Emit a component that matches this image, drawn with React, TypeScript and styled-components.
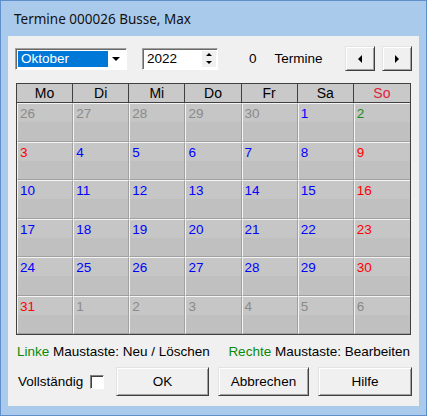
import React from 'react';
import styled, { createGlobalStyle } from 'styled-components';

const GlobalStyle = createGlobalStyle`
  html, body {
    margin: 0;
    padding: 0;
    background: #ffffff;
  }
  * {
    box-sizing: border-box;
  }
`;

// Window frame

const Window = styled.div`
  width: 427px;
  height: 416px;
  border: 1px solid #5e8fcc;
  background: #aacaec;
  display: flex;
  flex-direction: column;
  font-family: 'Liberation Sans', Arial, sans-serif;
  font-size: 13px;
  color: #000;
`;

const TitleBar = styled.div`
  height: 35px;
  padding-left: 13px;
  display: flex;
  align-items: center;
  font-family: 'Noto Sans', 'Open Sans', sans-serif;
  font-size: 13.5px;
  color: #111;
`;

const Client = styled.div`
  flex: 1;
  margin: 0 7px 9px 7px;
  background: #f0f0f0;
  display: flex;
  flex-direction: column;
  padding-top: 10px;
`;

// Toolbar

const Toolbar = styled.div`
  height: 25px;
  padding: 0 7px;
  display: flex;
  align-items: center;
`;

const Select = styled.div`
  width: 112px;
  height: 22px;
  display: flex;
  border: 1px solid;
  border-color: #a0a0a0 #ffffff #ffffff #a0a0a0;
  box-shadow: inset 1px 1px #696969;
  background: #ffffff;
  padding: 2px;
`;

const SelectValue = styled.div`
  flex: 1;
  background: #0078d7;
  color: #ffffff;
  padding-left: 3px;
  display: flex;
  align-items: center;
  font-size: 13.5px;
`;

const DropButton = styled.div`
  width: 16px;
  display: flex;
  align-items: center;
  justify-content: center;
  background: #ffffff;
`;

const YearBox = styled(Select)`
  width: 76px;
  margin-left: 15px;
  padding: 2px 1px 2px 2px;
`;

const YearValue = styled.div`
  flex: 1;
  padding-left: 2px;
  display: flex;
  align-items: center;
  font-size: 13.5px;
`;

const Spin = styled.div`
  width: 14px;
  display: flex;
  flex-direction: column;
  align-items: center;
  justify-content: space-around;
  background: #f0f0f0;
`;

const Count = styled.span`
  margin-left: 31px;
  font-size: 13.5px;
`;

const CountLabel = styled.span`
  margin-left: 18px;
  font-size: 13.5px;
`;

const NavButtons = styled.div`
  margin-left: auto;
  display: flex;
  gap: 7px;
`;

const Button = styled.button<{ $w: number; $h?: number }>`
  width: ${(p) => p.$w}px;
  height: ${(p) => p.$h ?? 29}px;
  padding: 0;
  font: inherit;
  font-size: 13.5px;
  color: #000;
  background: #f0f0f0;
  border: 1px solid;
  border-color: #e3e3e3 #404040 #404040 #e3e3e3;
  box-shadow: inset 1px 1px #ffffff, inset -1px -1px #a0a0a0;
  display: flex;
  align-items: center;
  justify-content: center;
`;

const Tri = ({ dir, size = 4 }: { dir: 'up' | 'down' | 'left' | 'right'; size?: number }) => {
  const s = size;
  const pts = {
    up: `0,${s} ${s},0 ${2 * s},${s}`,
    down: `0,0 ${2 * s},0 ${s},${s}`,
    left: `${s},0 ${s},${2 * s} 0,${s}`,
    right: `0,0 0,${2 * s} ${s},${s}`,
  }[dir];
  const horiz = dir === 'left' || dir === 'right';
  return (
    <svg width={horiz ? s : 2 * s} height={horiz ? 2 * s : s} style={{ display: 'block' }}>
      <polygon points={pts} fill="#000" />
    </svg>
  );
};

// Calendar grid

const Grid = styled.div`
  margin: 12px 8px 0 8px;
  height: 252px;
  border: 1px solid #404040;
  display: grid;
  grid-template-columns: repeat(7, 1fr);
  grid-template-rows: 19px repeat(6, 1fr);
  background: #c0c0c0;
`;

const HeadCell = styled.div<{ $red?: boolean; $last?: boolean }>`
  background: #c9c9c9;
  border-right: ${(p) => (p.$last ? 'none' : '1px solid #404040')};
  border-bottom: 1px solid #404040;
  display: flex;
  align-items: center;
  justify-content: center;
  font-size: 14px;
  color: ${(p) => (p.$red ? '#e0203c' : '#000')};
`;

const DayCell = styled.div<{ $color: string; $last?: boolean }>`
  border-left: 1px solid #f4f4f4;
  border-top: 1px solid #f4f4f4;
  border-right: ${(p) => (p.$last ? 'none' : '1px solid #a0a0a0')};
  border-bottom: 1px solid #a0a0a0;
  background: linear-gradient(#c6c6c6 0, #c6c6c6 18px, #c0c0c0 18px);
  color: ${(p) => p.$color};
  padding: 2px 2px;
  font-size: 13.5px;
`;

// Footer

const Legend = styled.div`
  margin-top: 9px;
  padding: 0 9px;
  display: flex;
  justify-content: space-between;
  font-size: 13.5px;
`;

const Green = styled.span`
  color: #0a8a0a;
`;

const BottomRow = styled.div`
  margin-top: 8px;
  padding: 0 7px 0 10px;
  display: flex;
  align-items: center;
`;

const CheckLabel = styled.span`
  margin-right: 7px;
  font-size: 13.5px;
`;

const Check = styled.span`
  width: 14px;
  height: 14px;
  background: #ffffff;
  border: 1px solid;
  border-color: #808080 #ffffff #ffffff #808080;
  box-shadow: inset 1px 1px #404040;
  margin-right: 12px;
`;

const Buttons = styled.div`
  display: flex;
  gap: 9px;
`;

const headers = ['Mo', 'Di', 'Mi', 'Do', 'Fr', 'Sa', 'So'];

const GRAY = '#8a8a8a';
const BLUE = '#0000ff';
const RED = '#ff0000';
const GREEN = '#1a8a1a';

type Day = { n: number; c: string };

const weeks: Day[][] = (() => {
  const out: Day[][] = [];
  const first: Day[] = [26, 27, 28, 29, 30].map((n) => ({ n, c: GRAY }));
  first.push({ n: 1, c: BLUE }, { n: 2, c: GREEN });
  out.push(first);
  for (let start = 3; start <= 24; start += 7) {
    const w: Day[] = [];
    for (let i = 0; i < 7; i++) {
      const n = start + i;
      const red = i === 6 || n === 3;
      w.push({ n, c: red ? RED : BLUE });
    }
    out.push(w);
  }
  out.push([{ n: 31, c: RED }, ...[1, 2, 3, 4, 5, 6].map((n) => ({ n, c: GRAY }))]);
  return out;
})();

function App() {
  return (
    <>
      <GlobalStyle />
      <Window>
        <TitleBar>Termine 000026 Busse, Max</TitleBar>
        <Client>
          <Toolbar>
            <Select>
              <SelectValue>Oktober</SelectValue>
              <DropButton>
                <Tri dir="down" size={4} />
              </DropButton>
            </Select>
            <YearBox>
              <YearValue>2022</YearValue>
              <Spin>
                <Tri dir="up" size={3} />
                <Tri dir="down" size={3} />
              </Spin>
            </YearBox>
            <Count>0</Count>
            <CountLabel>Termine</CountLabel>
            <NavButtons>
              <Button $w={30} $h={25}>
                <Tri dir="left" size={4} />
              </Button>
              <Button $w={30} $h={25}>
                <Tri dir="right" size={4} />
              </Button>
            </NavButtons>
          </Toolbar>

          <Grid>
            {headers.map((h, i) => (
              <HeadCell key={h} $red={h === 'So'} $last={i === 6}>
                {h}
              </HeadCell>
            ))}
            {weeks.map((w, wi) =>
              w.map((d, i) => (
                <DayCell key={wi + '-' + i} $color={d.c} $last={i === 6}>
                  {d.n}
                </DayCell>
              ))
            )}
          </Grid>

          <Legend>
            <span>
              <Green>Linke</Green> Maustaste: Neu / Löschen
            </span>
            <span>
              <Green>Rechte</Green> Maustaste: Bearbeiten
            </span>
          </Legend>

          <BottomRow>
            <CheckLabel>Vollständig</CheckLabel>
            <Check />
            <Buttons>
              <Button $w={93}>OK</Button>
              <Button $w={91}>Abbrechen</Button>
              <Button $w={94}>Hilfe</Button>
            </Buttons>
          </BottomRow>
        </Client>
      </Window>
    </>
  );
}

export default App;
